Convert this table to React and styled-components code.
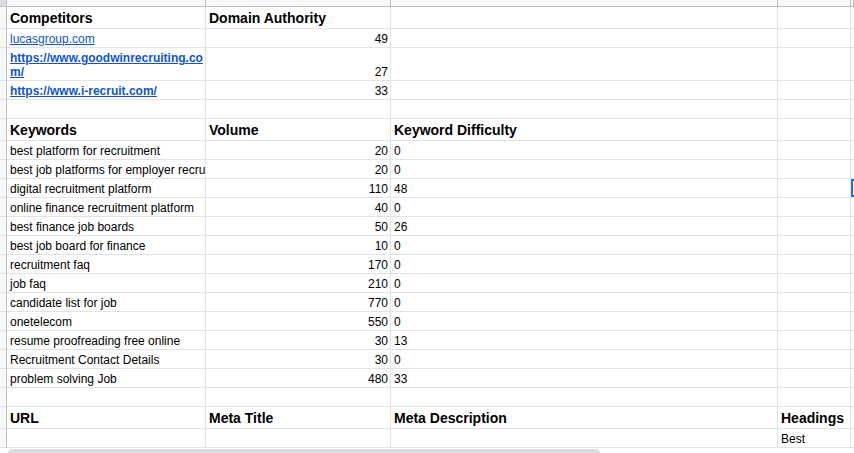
import React from "react";
import styled, { createGlobalStyle, css } from "styled-components";

const GlobalStyle = createGlobalStyle`
  html, body {
    margin: 0;
    padding: 0;
    background: #ffffff;
    overflow: hidden;
  }
  * { box-sizing: border-box; }
`;

const COLS = "7px 199px 185px 387px 73px 1fr";
const GRID = "#e2e3e3";
const HEAD_LINE = "#c0c0c0";

const Sheet = styled.div`
  width: 854px;
  height: 453px;
  display: flex;
  flex-direction: column;
  font-family: "Liberation Sans", Arial, sans-serif;
  color: #000;
  overflow: hidden;
`;

const ColumnStrip = styled.div`
  display: grid;
  grid-template-columns: ${COLS};
  height: 7px;
  flex: none;
`;

const ColumnHead = styled.div`
  background: ${(p) => (p.$corner ? "#dadce0" : "#f8f9fa")};
  border-right: 1px solid ${HEAD_LINE};
  border-bottom: 1px solid ${HEAD_LINE};
`;

const Row = styled.div`
  display: grid;
  grid-template-columns: ${COLS};
  height: ${(p) => p.$h}px;
  flex: none;
`;

const RowHead = styled.div`
  background: #f8f9fa;
  border-right: 1px solid ${HEAD_LINE};
  border-bottom: 1px solid ${GRID};
`;

const Cell = styled.div`
  display: flex;
  align-items: flex-end;
  justify-content: ${(p) => (p.$right ? "flex-end" : "flex-start")};
  min-width: 0;
  overflow: hidden;
  white-space: nowrap;
  border-right: 1px solid ${GRID};
  border-bottom: 1px solid ${GRID};
  padding: 0 ${(p) => (p.$right ? 2 : 3)}px 0 3px;
  font-size: 12px;
  line-height: 15px;
  ${(p) =>
    p.$head &&
    css`
      font-size: 14px;
      font-weight: 700;
      line-height: 17px;
      padding-bottom: 1px;
    `}
  ${(p) =>
    p.$wrap &&
    css`
      white-space: normal;
      word-break: break-all;
      line-height: 14px;
      padding-right: 1px;
      padding-bottom: 1px;
    `}
  ${(p) =>
    p.$selected &&
    css`
      box-shadow: inset 2px 0 0 #1a73e8, inset 0 2px 0 #1a73e8,
        inset 0 -2px 0 #1a73e8;
    `}
`;

const Link = styled.span`
  color: #1155cc;
  text-decoration: underline;
  font-weight: ${(p) => (p.$bold ? 700 : 400)};
`;

const ScrollTrack = styled.div`
  flex: 1;
  background: #ffffff;
  padding: 1px 0 0 8px;
`;

const ScrollThumb = styled.div`
  width: 592px;
  height: 10px;
  background: #dadce0;
  border-radius: 4px;
`;

const H = (t) => ({ t, head: true });

const rows = [
  { h: 22, cells: [H("Competitors"), H("Domain Authority")] },
  { h: 19, cells: [{ link: "lucasgroup.com" }, { t: "49", right: true }] },
  {
    h: 33,
    cells: [
      { link: "https://www.goodwinrecruiting.com/", bold: true, wrap: true },
      { t: "27", right: true },
    ],
  },
  {
    h: 19,
    cells: [
      { link: "https://www.i-recruit.com/", bold: true },
      { t: "33", right: true },
    ],
  },
  { h: 19, cells: [] },
  { h: 22, cells: [H("Keywords"), H("Volume"), H("Keyword Difficulty")] },
  ...[
    ["best platform for recruitment", "20", "0"],
    ["best job platforms for employer recruitment", "20", "0"],
    ["digital recruitment platform", "110", "48", true],
    ["online finance recruitment platform", "40", "0"],
    ["best finance job boards", "50", "26"],
    ["best job board for finance", "10", "0"],
    ["recruitment faq", "170", "0"],
    ["job faq", "210", "0"],
    ["candidate list for job", "770", "0"],
    ["onetelecom", "550", "0"],
    ["resume proofreading free online", "30", "13"],
    ["Recruitment Contact Details", "30", "0"],
    ["problem solving Job", "480", "33"],
  ].map(([k, v, d, sel]) => ({
    h: 19,
    cells: [{ t: k }, { t: v, right: true }, { t: d }, {}, { selected: sel }],
  })),
  { h: 19, cells: [] },
  {
    h: 22,
    cells: [H("URL"), H("Meta Title"), H("Meta Description"), H("Headings")],
  },
  { h: 19, cells: [{}, {}, {}, { t: "Best" }] },
];

const App = () => (
  <Sheet>
    <GlobalStyle />
    <ColumnStrip>
      <ColumnHead $corner />
      {[0, 1, 2, 3, 4].map((i) => (
        <ColumnHead key={i} />
      ))}
    </ColumnStrip>
    {rows.map((row, r) => (
      <Row key={r} $h={row.h}>
        <RowHead />
        {[0, 1, 2, 3, 4].map((c) => {
          const cell = row.cells[c] || {};
          return (
            <Cell
              key={c}
              $head={cell.head}
              $right={cell.right}
              $wrap={cell.wrap}
              $selected={cell.selected}
            >
              {cell.link ? (
                <Link $bold={cell.bold}>{cell.link}</Link>
              ) : (
                cell.t
              )}
            </Cell>
          );
        })}
      </Row>
    ))}
    <ScrollTrack>
      <ScrollThumb />
    </ScrollTrack>
  </Sheet>
);

export default App;
